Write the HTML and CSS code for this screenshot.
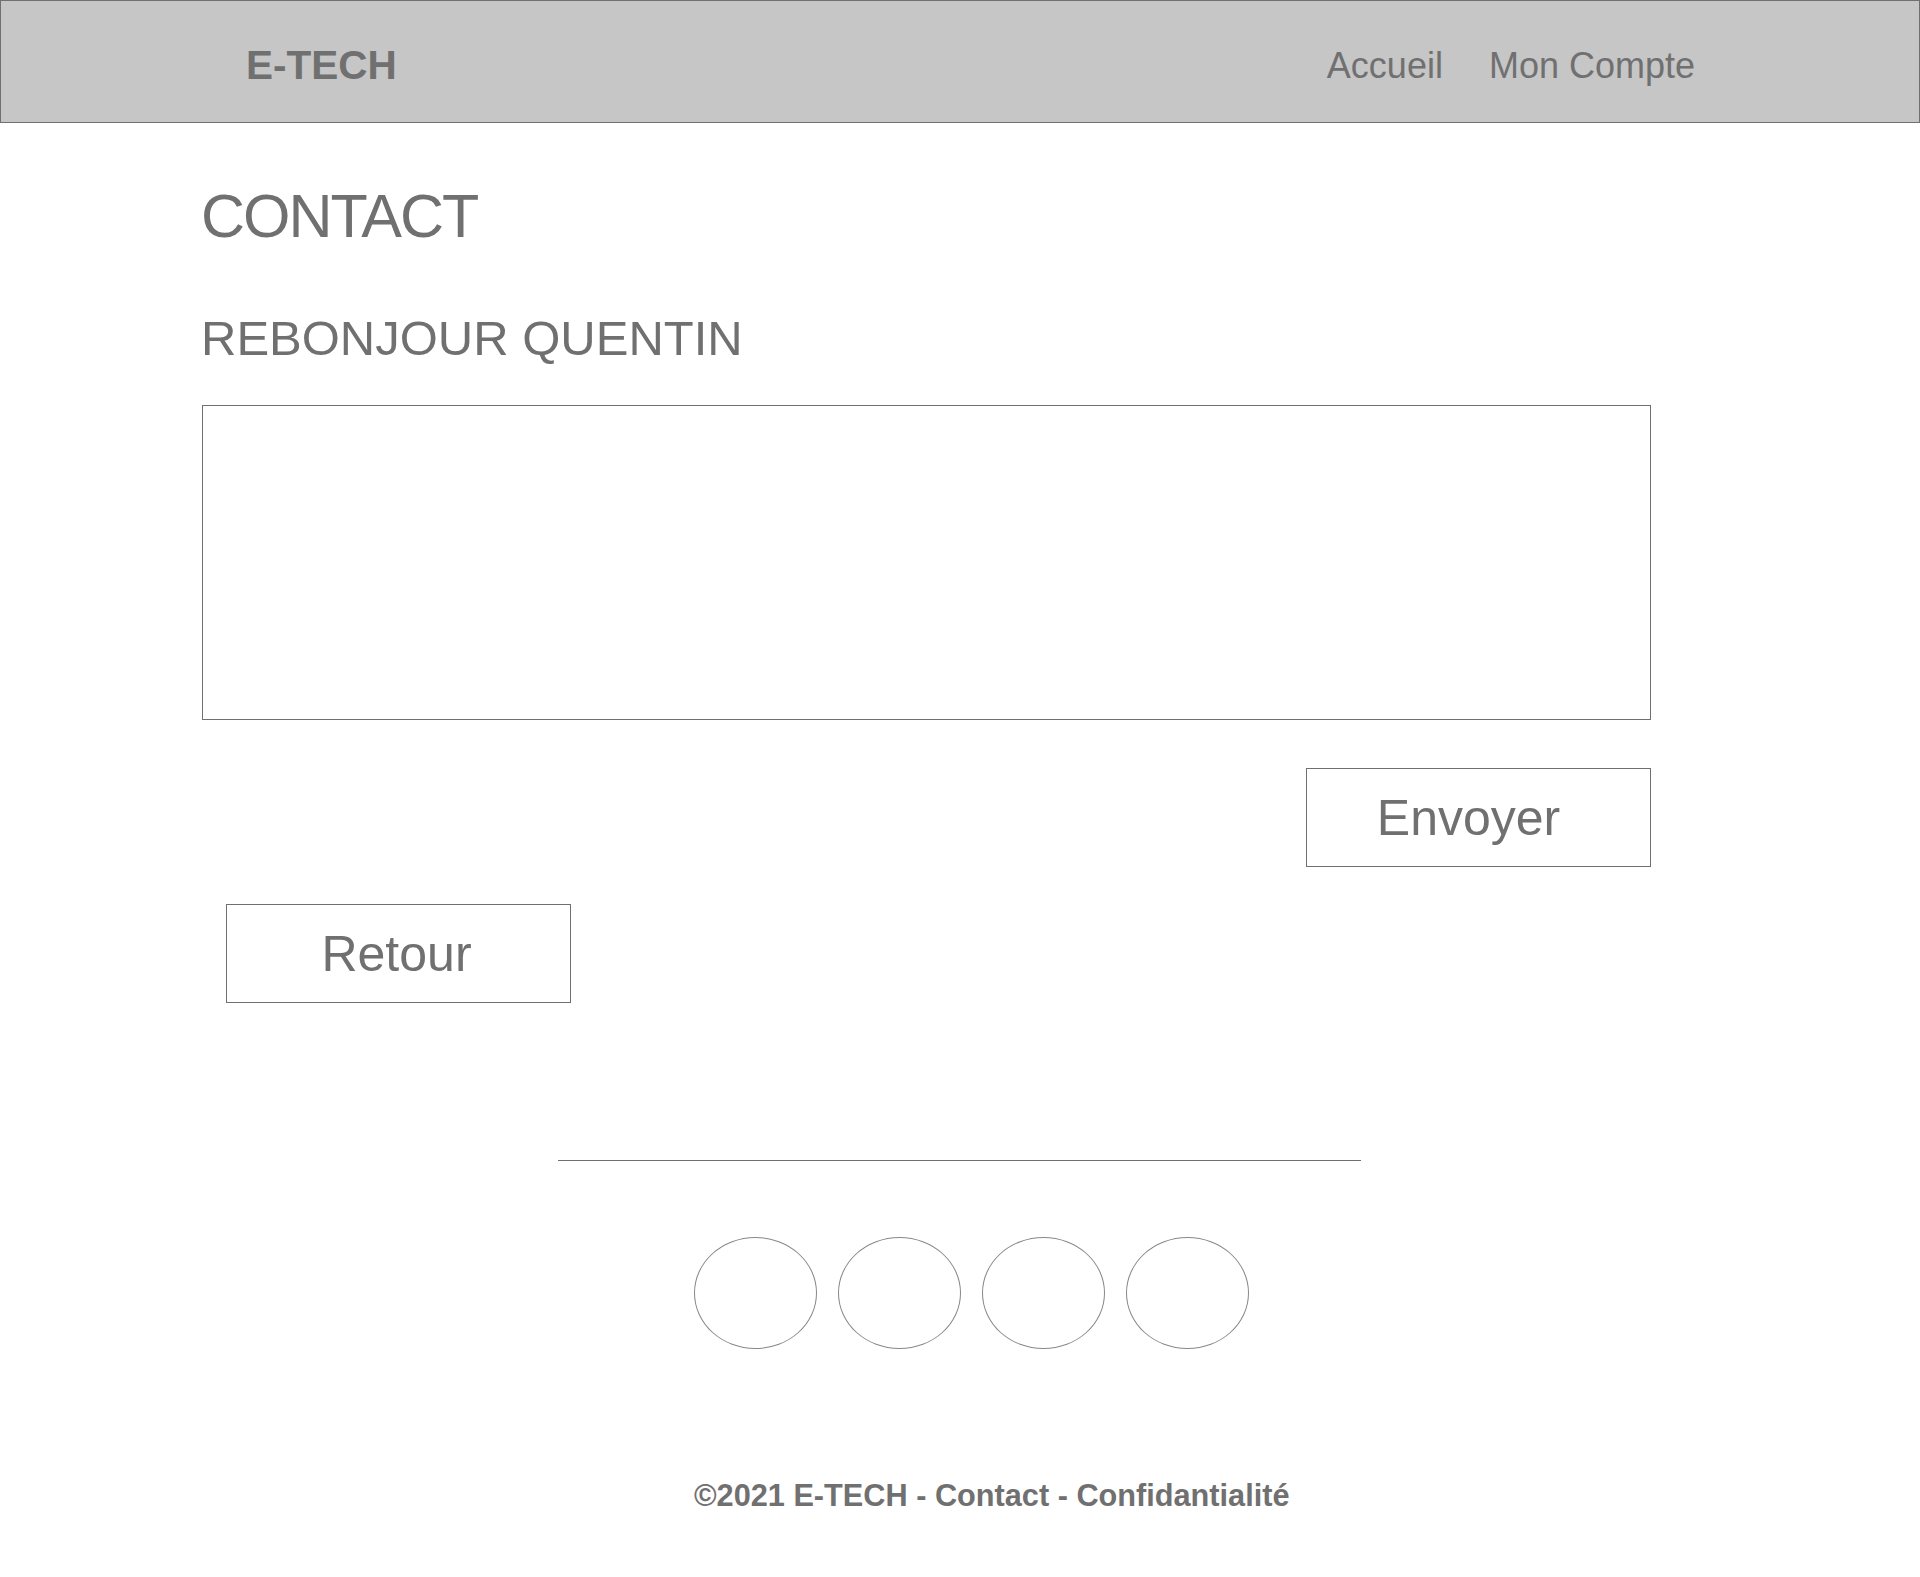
FILE: index.html
```html
<!DOCTYPE html>
<html lang="fr">
<head>
<meta charset="utf-8">
<title>E-TECH - Contact</title>
<link rel="stylesheet" href="styles.css">
</head>
<body>
<header class="topbar">
  <div class="brand">E-TECH</div>
  <nav class="nav">
    <a class="nav-link" href="#">Accueil</a>
    <a class="nav-link" href="#">Mon Compte</a>
  </nav>
</header>
<main class="content">
  <h1 class="page-title">CONTACT</h1>
  <h2 class="greeting">REBONJOUR QUENTIN</h2>
  <textarea class="message" aria-label="Message"></textarea>
  <div class="send-row">
    <button class="btn btn-send" type="button">Envoyer</button>
  </div>
  <button class="btn btn-back" type="button">Retour</button>
</main>
<footer class="footer">
  <div class="footer-rule"></div>
  <div class="socials">
    <span class="social"></span>
    <span class="social"></span>
    <span class="social"></span>
    <span class="social"></span>
  </div>
  <p class="legal">©2021 E-TECH - Contact - Confidantialité</p>
</footer>
</body>
</html>
```

FILE: styles.css
```css
html, body {
  margin: 0;
  padding: 0;
  background: #ffffff;
}

body {
  font-family: "Liberation Sans", Arial, Helvetica, sans-serif;
  color: #707070;
}

.topbar {
  box-sizing: border-box;
  height: 123px;
  background: #c6c6c6;
  border: 1px solid #707070;
  display: flex;
  justify-content: space-between;
  align-items: flex-start;
  padding: 44px 224px 0 245px;
}

.brand {
  font-size: 40.5px;
  line-height: 1;
  font-weight: bold;
}

.nav {
  display: flex;
  gap: 46px;
  padding-top: 3px;
}

.nav-link {
  font-size: 36px;
  line-height: 1;
  color: #707070;
  text-decoration: none;
}

.content {
  padding-left: 202px;
  display: flex;
  flex-direction: column;
  align-items: flex-start;
}

.page-title {
  margin: 63px 0 0 -1px;
  font-size: 61px;
  line-height: 1;
  font-weight: normal;
  letter-spacing: -2px;
}

.greeting {
  margin: 67px 0 0 -1px;
  font-size: 49px;
  line-height: 1;
  font-weight: normal;
  letter-spacing: 0;
}

.message {
  box-sizing: border-box;
  display: block;
  margin-top: 42px;
  width: 1449px;
  height: 315px;
  border: 1px solid #707070;
  border-radius: 0;
  resize: none;
  outline: none;
  background: #ffffff;
}

.send-row {
  width: 1449px;
  display: flex;
  justify-content: flex-end;
  margin-top: 48px;
}

.btn {
  box-sizing: border-box;
  width: 345px;
  height: 99px;
  border: 1px solid #707070;
  border-radius: 0;
  background: #ffffff;
  color: #707070;
  font-family: "Liberation Sans", Arial, Helvetica, sans-serif;
  font-size: 50px;
  line-height: 1;
  padding: 0;
  cursor: pointer;
}

.btn-send {
  padding-right: 20px;
}

.btn-back {
  margin-top: 37px;
  margin-left: 24px;
  padding-right: 4px;
}

.footer {
  display: flex;
  flex-direction: column;
  align-items: flex-start;
}

.footer-rule {
  margin: 157px 0 0 558px;
  width: 803px;
  height: 1px;
  background: #707070;
}

.socials {
  display: flex;
  gap: 21px;
  margin: 76px 0 0 694px;
}

.social {
  box-sizing: border-box;
  width: 123px;
  height: 112px;
  border: 1px solid #888888;
  border-radius: 50%;
}

.legal {
  margin: 132px 0 0 694px;
  font-size: 30.7px;
  line-height: 1;
  font-weight: bold;
}
```
